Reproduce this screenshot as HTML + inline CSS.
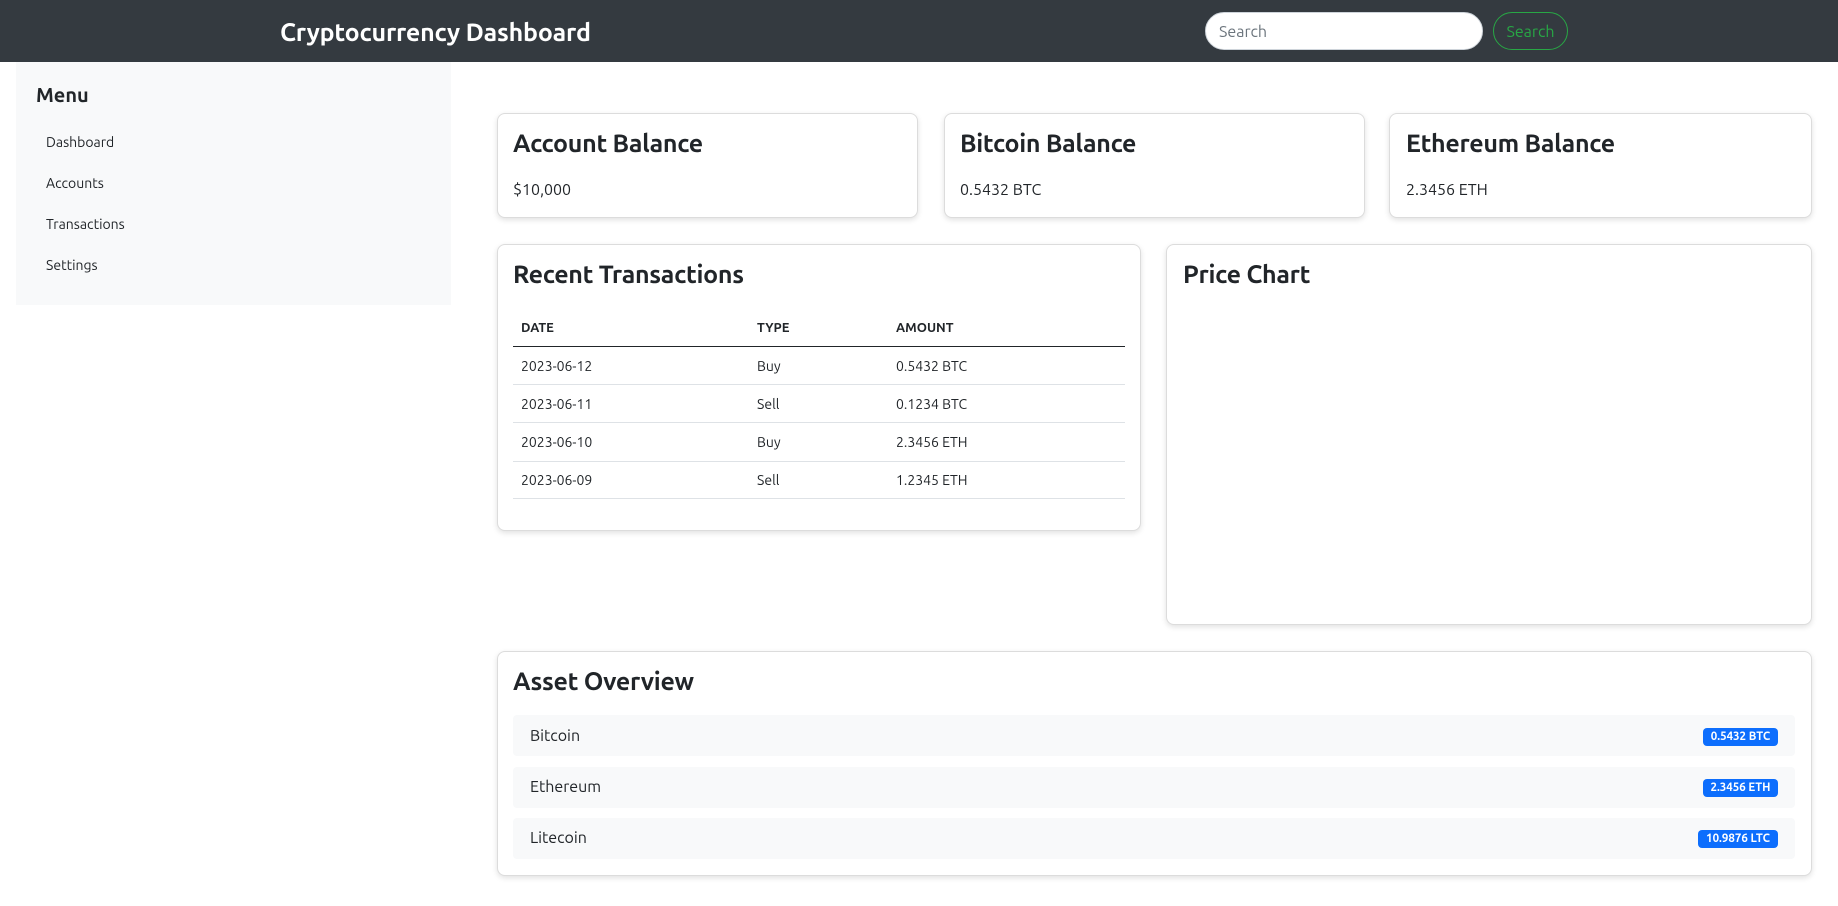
<!DOCTYPE html>
<html><head><meta charset="utf-8"><style>
*{box-sizing:border-box;margin:0;padding:0}
body{width:1838px;height:906px;background:#fff;font-family:"Ubuntu","Liberation Sans",sans-serif;color:#212529;position:relative;overflow:hidden}
.abs{position:absolute}
.nav{left:0;top:0;width:1838px;height:62px;background:#343a40}
.title{left:280px;top:18px;color:#fff;font-size:25px;font-weight:bold;letter-spacing:-0.2px}
.search{left:1205px;top:12px;width:278px;height:38px;border-radius:19px;background:#fff;border:1px solid #ced4da;font-size:16px;color:#6c757d;padding:10px 13px}
.btn{left:1493px;top:12px;width:75px;height:38px;border-radius:19px;border:1px solid #28a745;color:#28a745;font-size:16px;text-align:center;line-height:38px}
.side{left:16px;top:62px;width:435px;height:243px;background:#f8f9fa}
.menu{left:36px;top:83px;font-size:20px;font-weight:bold}
.mi{left:46px;font-size:14px}
.card{border:1px solid #dcdcdc;border-radius:8px;background:#fff;box-shadow:0 2px 6px rgba(0,0,0,.12)}
.h{font-size:25px;font-weight:700;letter-spacing:-0.3px}
.v{font-size:16px}
.th{font-size:13px;font-weight:bold}
.td{font-size:14px}
.line{height:1px;background:#dee2e6}
.item{left:513px;width:1282px;height:41px;background:#f8f9fa;border-radius:4px}
.it{left:530px;font-size:16px}
.badge{height:18px;background:#0d6efd;color:#fff;font-size:11.5px;font-weight:bold;border-radius:4px;text-align:center;line-height:18px}
</style></head><body>
<div class="abs nav"></div>
<div class="abs title">Cryptocurrency Dashboard</div>
<div class="abs search">Search</div>
<div class="abs btn">Search</div>
<div class="abs side"></div>
<div class="abs menu">Menu</div>
<div class="abs mi" style="top:134px">Dashboard</div>
<div class="abs mi" style="top:175px">Accounts</div>
<div class="abs mi" style="top:216px">Transactions</div>
<div class="abs mi" style="top:257px">Settings</div>

<div class="abs card" style="left:497px;top:113px;width:421px;height:105px"></div>
<div class="abs card" style="left:944px;top:113px;width:421px;height:105px"></div>
<div class="abs card" style="left:1389px;top:113px;width:423px;height:105px"></div>
<div class="abs h" style="left:513px;top:129px">Account Balance</div>
<div class="abs h" style="left:960px;top:129px">Bitcoin Balance</div>
<div class="abs h" style="left:1406px;top:129px">Ethereum Balance</div>
<div class="abs v" style="left:513px;top:181px">$10,000</div>
<div class="abs v" style="left:960px;top:181px">0.5432 BTC</div>
<div class="abs v" style="left:1406px;top:181px">2.3456 ETH</div>

<div class="abs card" style="left:497px;top:244px;width:644px;height:287px"></div>
<div class="abs h" style="left:513px;top:260px">Recent Transactions</div>
<div class="abs th" style="left:521px;top:321px">DATE</div>
<div class="abs th" style="left:757px;top:321px">TYPE</div>
<div class="abs th" style="left:896px;top:321px">AMOUNT</div>
<div class="abs" style="left:513px;top:346px;width:612px;height:1px;background:#212529"></div>
<div class="abs td" style="left:521px;top:358px">2023-06-12</div><div class="abs td" style="left:757px;top:358px">Buy</div><div class="abs td" style="left:896px;top:358px">0.5432 BTC</div>
<div class="abs line" style="left:513px;top:384px;width:612px"></div>
<div class="abs td" style="left:521px;top:396px">2023-06-11</div><div class="abs td" style="left:757px;top:396px">Sell</div><div class="abs td" style="left:896px;top:396px">0.1234 BTC</div>
<div class="abs line" style="left:513px;top:422px;width:612px"></div>
<div class="abs td" style="left:521px;top:434px">2023-06-10</div><div class="abs td" style="left:757px;top:434px">Buy</div><div class="abs td" style="left:896px;top:434px">2.3456 ETH</div>
<div class="abs line" style="left:513px;top:461px;width:612px"></div>
<div class="abs td" style="left:521px;top:472px">2023-06-09</div><div class="abs td" style="left:757px;top:472px">Sell</div><div class="abs td" style="left:896px;top:472px">1.2345 ETH</div>
<div class="abs line" style="left:513px;top:498px;width:612px"></div>

<div class="abs card" style="left:1166px;top:244px;width:646px;height:381px"></div>
<div class="abs h" style="left:1183px;top:260px">Price Chart</div>

<div class="abs card" style="left:497px;top:651px;width:1315px;height:225px"></div>
<div class="abs h" style="left:513px;top:667px">Asset Overview</div>
<div class="abs item" style="top:715px"></div>
<div class="abs item" style="top:767px"></div>
<div class="abs item" style="top:818px"></div>
<div class="abs it" style="top:727px">Bitcoin</div>
<div class="abs it" style="top:778px">Ethereum</div>
<div class="abs it" style="top:829px">Litecoin</div>
<div class="abs badge" style="left:1703px;top:728px;width:75px">0.5432 BTC</div>
<div class="abs badge" style="left:1703px;top:779px;width:75px">2.3456 ETH</div>
<div class="abs badge" style="left:1698px;top:830px;width:80px">10.9876 LTC</div>
</body></html>
